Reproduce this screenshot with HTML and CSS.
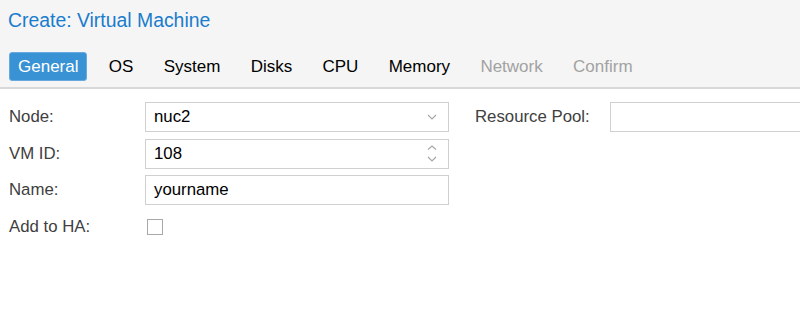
FILE: index.html
```html
<!DOCTYPE html>
<html lang="en">
<head>
  <meta charset="UTF-8" />
  <title>Create: Virtual Machine</title>
  <link rel="stylesheet" href="styles.css">
</head>
<body>
  <div class="header">
    <h1 class="title">Create: Virtual Machine</h1>
    <div class="tabs">
      <button class="tab active">General</button>
      <button class="tab">OS</button>
      <button class="tab">System</button>
      <button class="tab">Disks</button>
      <button class="tab">CPU</button>
      <button class="tab">Memory</button>
      <button class="tab disabled">Network</button>
      <button class="tab disabled">Confirm</button>
    </div>
  </div>

  <div class="form">
    <div class="col col-left">
      <div class="row">
        <label class="label">Node:</label>
        <div class="field">
          <span>nuc2</span>
          <svg class="trigger" width="10" height="6" viewBox="0 0 10 6">
            <path d="M1 1 L5 5 L9 1" fill="none" stroke="#a8a8a8" stroke-width="1.2"/>
          </svg>
        </div>
      </div>
      <div class="row">
        <label class="label">VM ID:</label>
        <div class="field">
          <span>108</span>
          <svg class="trigger" width="10" height="18" viewBox="0 0 10 18">
            <path d="M1 4.5 L5 1 L9 4.5" fill="none" stroke="#a8a8a8" stroke-width="1.2"/>
            <path d="M1 12 L5 16 L9 12" fill="none" stroke="#a8a8a8" stroke-width="1.2"/>
          </svg>
        </div>
      </div>
      <div class="row">
        <label class="label">Name:</label>
        <div class="field"><span>yourname</span></div>
      </div>
      <div class="row">
        <label class="label">Add to HA:</label>
        <div class="checkbox"></div>
      </div>
    </div>

    <div class="col col-right">
      <div class="row">
        <label class="label label-wide">Resource Pool:</label>
        <div class="field field-wide"></div>
      </div>
    </div>
  </div>
</body>
</html>
```

FILE: styles.css
```css
body {
  margin: 0;
  font-family: "Liberation Sans", Arial, sans-serif;
  background: #fff;
  color: #000;
  overflow: hidden;
}

.header {
  background: #f5f5f5;
  border-bottom: 2px solid #d8d8d8;
  height: 89px;
  box-sizing: border-box;
}

.title {
  margin: 0;
  padding: 9px 0 0 8px;
  font-size: 19.4px;
  line-height: 22px;
  font-weight: normal;
  color: #1a7ccc;
}

.tabs {
  display: flex;
  gap: 12.3px;
  margin-top: 21px;
  padding-left: 9px;
}

.tab {
  height: 29px;
  padding: 0 8px;
  border: 1px solid transparent;
  border-radius: 3px;
  background: transparent;
  font-family: inherit;
  font-size: 17px;
  line-height: 27px;
  color: #000;
  cursor: pointer;
}

.tab.active {
  background: #3892d4;
  border-color: #6aa9de;
  color: #fff;
}

.tab.disabled {
  color: #a2a2a2;
}

.form {
  display: flex;
  gap: 26px;
  padding: 13px 0 0 9px;
  overflow: hidden;
}

.col {
  display: flex;
  flex-direction: column;
  gap: 6.5px;
}

.col-right {
  flex: 1;
  min-width: 0;
}

.row {
  display: flex;
  align-items: center;
  height: 30px;
}

.label {
  width: 136px;
  flex-shrink: 0;
  font-size: 16.8px;
  color: #404040;
}

.label-wide {
  width: 135px;
}

.field {
  width: 304px;
  height: 30px;
  box-sizing: border-box;
  border: 1px solid #d0d0d0;
  background: #fff;
  display: flex;
  align-items: center;
  justify-content: space-between;
  padding: 0 11px 0 8px;
  font-size: 16.8px;
  color: #000;
}

.field-wide {
  flex: 1;
  margin-right: -4px;
}

.trigger {
  display: block;
}

.checkbox {
  width: 16px;
  height: 16px;
  box-sizing: border-box;
  margin-left: 2px;
  border: 1px solid #a8a8a8;
  background: #fff;
}
```
